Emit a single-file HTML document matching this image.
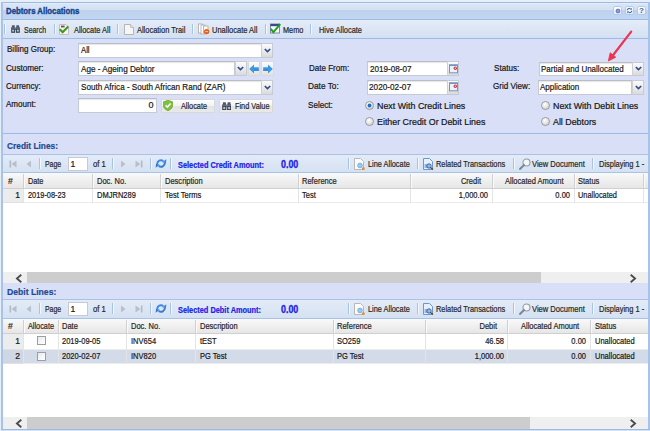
<!DOCTYPE html>
<html><head><meta charset="utf-8"><style>
html,body{margin:0;padding:0;width:650px;height:431px;overflow:hidden;background:#e8eef8}
body>div,body>svg{position:absolute}
</style></head><body>
<div style="left:0px;top:0px;width:650px;height:431px;background:#e8eef8"></div>
<div style="left:1px;top:2px;width:648px;height:428px;border:1px solid #99bbe8;box-sizing:border-box;background:#d8dff7"></div>
<div style="left:2px;top:3px;width:646px;height:16px;background:linear-gradient(#eef3fa 0%,#dae5f4 7%,#d5e1f3 42%,#bcd1ee 44%,#c3d6f0 100%)"></div>
<div style="left:2px;top:19px;width:646px;height:1px;background:#99bbe8"></div>
<div style="left:6.00px;transform-origin:0 50%;top:7.02px;height:8.8px;line-height:8.8px;font-family:'Liberation Sans', sans-serif;font-size:8.8px;font-weight:bold;color:#15428b;white-space:pre;-webkit-text-stroke:0.35px currentColor;transform:scaleX(0.8867);">Debtors Allocations</div>
<div style="left:613px;top:6px;width:9px;height:9px;background:linear-gradient(#ffffff,#e4edf8);border:1px solid #b3cbea;border-radius:2px;box-sizing:border-box"></div>
<div style="left:625px;top:6px;width:9px;height:9px;background:linear-gradient(#ffffff,#e4edf8);border:1px solid #b3cbea;border-radius:2px;box-sizing:border-box"></div>
<div style="left:637px;top:6px;width:9px;height:9px;background:linear-gradient(#ffffff,#e4edf8);border:1px solid #b3cbea;border-radius:2px;box-sizing:border-box"></div>
<div style="left:2px;top:20px;width:646px;height:18px;background:linear-gradient(#e4ecf7,#d4e0f1)"></div>
<div style="left:2px;top:38px;width:646px;height:1px;background:#99bbe8"></div>
<div style="left:4px;top:24px;width:1px;height:10px;background:#a7c3ea"></div>
<div style="left:5px;top:24px;width:1px;height:10px;background:#f4f8fd"></div>
<div style="left:24.20px;transform-origin:0 50%;top:25.62px;height:8.8px;line-height:8.8px;font-family:'Liberation Sans', sans-serif;font-size:8.8px;font-weight:normal;color:#262626;white-space:pre;-webkit-text-stroke:0.2px currentColor;transform:scaleX(0.7892);">Search</div>
<div style="left:54px;top:24px;width:1px;height:10px;background:#a7c3ea"></div>
<div style="left:55px;top:24px;width:1px;height:10px;background:#f4f8fd"></div>
<div style="left:73.70px;transform-origin:0 50%;top:25.62px;height:8.8px;line-height:8.8px;font-family:'Liberation Sans', sans-serif;font-size:8.8px;font-weight:normal;color:#262626;white-space:pre;-webkit-text-stroke:0.2px currentColor;transform:scaleX(0.8436);">Allocate All</div>
<div style="left:117px;top:24px;width:1px;height:10px;background:#a7c3ea"></div>
<div style="left:118px;top:24px;width:1px;height:10px;background:#f4f8fd"></div>
<div style="left:136.60px;transform-origin:0 50%;top:25.62px;height:8.8px;line-height:8.8px;font-family:'Liberation Sans', sans-serif;font-size:8.8px;font-weight:normal;color:#262626;white-space:pre;-webkit-text-stroke:0.2px currentColor;transform:scaleX(0.8459);">Allocation Trail</div>
<div style="left:192px;top:24px;width:1px;height:10px;background:#a7c3ea"></div>
<div style="left:193px;top:24px;width:1px;height:10px;background:#f4f8fd"></div>
<div style="left:211.50px;transform-origin:0 50%;top:25.62px;height:8.8px;line-height:8.8px;font-family:'Liberation Sans', sans-serif;font-size:8.8px;font-weight:normal;color:#262626;white-space:pre;-webkit-text-stroke:0.2px currentColor;transform:scaleX(0.8516);">Unallocate All</div>
<div style="left:265px;top:24px;width:1px;height:10px;background:#a7c3ea"></div>
<div style="left:266px;top:24px;width:1px;height:10px;background:#f4f8fd"></div>
<div style="left:282.80px;transform-origin:0 50%;top:25.62px;height:8.8px;line-height:8.8px;font-family:'Liberation Sans', sans-serif;font-size:8.8px;font-weight:normal;color:#262626;white-space:pre;-webkit-text-stroke:0.2px currentColor;transform:scaleX(0.8342);">Memo</div>
<div style="left:310px;top:24px;width:1px;height:10px;background:#a7c3ea"></div>
<div style="left:311px;top:24px;width:1px;height:10px;background:#f4f8fd"></div>
<div style="left:318.90px;transform-origin:0 50%;top:25.62px;height:8.8px;line-height:8.8px;font-family:'Liberation Sans', sans-serif;font-size:8.8px;font-weight:normal;color:#262626;white-space:pre;-webkit-text-stroke:0.2px currentColor;transform:scaleX(0.8455);">Hive Allocate</div>
<div style="left:2px;top:133px;width:646px;height:1px;background:#99bbe8"></div>
<div style="left:6.80px;transform-origin:0 50%;top:45.45px;height:9px;line-height:9px;font-family:'Liberation Sans', sans-serif;font-size:9px;font-weight:normal;color:#151515;white-space:pre;-webkit-text-stroke:0.2px currentColor;transform:scaleX(0.8921);">Billing Group:</div>
<div style="left:6.30px;transform-origin:0 50%;top:63.75px;height:9px;line-height:9px;font-family:'Liberation Sans', sans-serif;font-size:9px;font-weight:normal;color:#151515;white-space:pre;-webkit-text-stroke:0.2px currentColor;transform:scaleX(0.9033);">Customer:</div>
<div style="left:6.30px;transform-origin:0 50%;top:81.95px;height:9px;line-height:9px;font-family:'Liberation Sans', sans-serif;font-size:9px;font-weight:normal;color:#151515;white-space:pre;-webkit-text-stroke:0.2px currentColor;transform:scaleX(0.8894);">Currency:</div>
<div style="left:6.30px;transform-origin:0 50%;top:100.45px;height:9px;line-height:9px;font-family:'Liberation Sans', sans-serif;font-size:9px;font-weight:normal;color:#151515;white-space:pre;-webkit-text-stroke:0.2px currentColor;transform:scaleX(0.8947);">Amount:</div>
<div style="left:78px;top:43px;width:184px;height:15px;background:#fff;border:1px solid #c6cad4;border-top-color:#b9bdc8;box-sizing:border-box;box-shadow:inset 0 1px 1px #e6e6e6"></div>
<div style="left:261px;top:43px;width:12px;height:15px;background:linear-gradient(#fafafa 0%,#ececec 50%,#dadada 100%);border:1px solid #c6cad4;border-left-color:#d0d0d0;box-sizing:border-box"></div>
<svg style="left:263.5px;top:48.0px" width="7" height="5" viewBox="0 0 7 5"><path d="M0.8 1 L3.5 3.6 L6.2 1" fill="none" stroke="#2a4a8a" stroke-width="1.6"/></svg>
<div style="left:81.00px;transform-origin:0 50%;top:45.95px;height:9px;line-height:9px;font-family:'Liberation Sans', sans-serif;font-size:9px;font-weight:normal;color:#181818;white-space:pre;-webkit-text-stroke:0.2px currentColor;transform:scaleX(0.8587);">All</div>
<div style="left:78px;top:61px;width:157px;height:15px;background:#fff;border:1px solid #c6cad4;border-top-color:#b9bdc8;box-sizing:border-box;box-shadow:inset 0 1px 1px #e6e6e6"></div>
<div style="left:234.5px;top:61px;width:12px;height:15px;background:linear-gradient(#fafafa 0%,#ececec 50%,#dadada 100%);border:1px solid #c6cad4;border-left-color:#d0d0d0;box-sizing:border-box"></div>
<svg style="left:237.0px;top:66.0px" width="7" height="5" viewBox="0 0 7 5"><path d="M0.8 1 L3.5 3.6 L6.2 1" fill="none" stroke="#2a4a8a" stroke-width="1.6"/></svg>
<div style="left:81.00px;transform-origin:0 50%;top:64.85px;height:9px;line-height:9px;font-family:'Liberation Sans', sans-serif;font-size:9px;font-weight:normal;color:#181818;white-space:pre;-webkit-text-stroke:0.2px currentColor;transform:scaleX(0.9055);">Age - Ageing Debtor</div>
<div style="left:247.5px;top:61px;width:12.5px;height:14.5px;background:linear-gradient(#fbfbfb 0%,#f0f0f0 50%,#e2e2e2 100%);border:1px solid #dadada;box-sizing:border-box"></div>
<svg style="left:249.0px;top:63.5px" width="10" height="10" viewBox="0 0 10 10"><path d="M0.2 5 L5 0.6 L5 3.3 L9.8 3.3 L9.8 6.7 L5 6.7 L5 9.4 Z" fill="#3a98e4"/><path d="M5 6.7 L9.8 6.7 L9.8 5.6 L5 5.6 Z" fill="#2a7fd0"/></svg>
<div style="left:261px;top:61px;width:12.5px;height:14.5px;background:linear-gradient(#fbfbfb 0%,#f0f0f0 50%,#e2e2e2 100%);border:1px solid #dadada;box-sizing:border-box"></div>
<svg style="left:262.5px;top:63.5px" width="10" height="10" viewBox="0 0 10 10"><path d="M9.8 5 L5 0.6 L5 3.3 L0.2 3.3 L0.2 6.7 L5 6.7 L5 9.4 Z" fill="#3a98e4"/><path d="M5 6.7 L0.2 6.7 L0.2 5.6 L5 5.6 Z" fill="#2a7fd0"/></svg>
<div style="left:78px;top:80px;width:184px;height:15px;background:#fff;border:1px solid #c6cad4;border-top-color:#b9bdc8;box-sizing:border-box;box-shadow:inset 0 1px 1px #e6e6e6"></div>
<div style="left:261px;top:80px;width:12px;height:15px;background:linear-gradient(#fafafa 0%,#ececec 50%,#dadada 100%);border:1px solid #c6cad4;border-left-color:#d0d0d0;box-sizing:border-box"></div>
<svg style="left:263.5px;top:85.0px" width="7" height="5" viewBox="0 0 7 5"><path d="M0.8 1 L3.5 3.6 L6.2 1" fill="none" stroke="#2a4a8a" stroke-width="1.6"/></svg>
<div style="left:81.00px;transform-origin:0 50%;top:82.95px;height:9px;line-height:9px;font-family:'Liberation Sans', sans-serif;font-size:9px;font-weight:normal;color:#181818;white-space:pre;-webkit-text-stroke:0.2px currentColor;transform:scaleX(0.8999);">South Africa - South African Rand (ZAR)</div>
<div style="left:78px;top:98px;width:79px;height:15px;background:#fff;border:1px solid #c6cad4;border-top-color:#b9bdc8;box-sizing:border-box;box-shadow:inset 0 1px 1px #e6e6e6"></div>
<div style="left:-146.50px;width:300px;text-align:right;transform-origin:100% 50%;top:101.15px;height:9px;line-height:9px;font-family:'Liberation Sans', sans-serif;font-size:9px;font-weight:normal;color:#181818;white-space:pre;-webkit-text-stroke:0.2px currentColor;">0</div>
<div style="left:160.5px;top:98.5px;width:54.5px;height:14px;background:linear-gradient(#fdfdfd 0%,#f2f2f2 50%,#e4e4e4 51%,#e9e9e9 100%);border:1px solid #d8d8d8;border-radius:1px;box-sizing:border-box"></div>
<svg style="left:163px;top:100px" width="10" height="11" viewBox="0 0 10 11"><path d="M5 0.3 L9.6 1.8 L9.6 5.5 C9.6 8 7.5 9.7 5 10.7 C2.5 9.7 0.4 8 0.4 5.5 L0.4 1.8 Z" fill="#7cc23a" stroke="#5a9a26" stroke-width="0.6"/><path d="M2.6 5.4 L4.4 7.1 L7.6 3.6" fill="none" stroke="#fff" stroke-width="1.5"/></svg>
<div style="left:180.50px;transform-origin:0 50%;top:102.09px;height:8.6px;line-height:8.6px;font-family:'Liberation Sans', sans-serif;font-size:8.6px;font-weight:normal;color:#262626;white-space:pre;-webkit-text-stroke:0.2px currentColor;transform:scaleX(0.8503);">Allocate</div>
<div style="left:219px;top:98.5px;width:54px;height:14px;background:linear-gradient(#fdfdfd 0%,#f2f2f2 50%,#e4e4e4 51%,#e9e9e9 100%);border:1px solid #d8d8d8;border-radius:1px;box-sizing:border-box"></div>
<div style="left:234.50px;transform-origin:0 50%;top:102.09px;height:8.6px;line-height:8.6px;font-family:'Liberation Sans', sans-serif;font-size:8.6px;font-weight:normal;color:#262626;white-space:pre;-webkit-text-stroke:0.2px currentColor;transform:scaleX(0.8528);">Find Value</div>
<svg style="left:221.5px;top:101.5px" width="9.450000000000001" height="8.4" viewBox="0 0 9 8"><rect x="0.9" y="0.3" width="2.8" height="2.4" fill="#4a5565"/><rect x="5.3" y="0.3" width="2.8" height="2.4" fill="#4a5565"/><rect x="0.2" y="2.3" width="3.9" height="5.5" fill="#343d4a"/><rect x="4.9" y="2.3" width="3.9" height="5.5" fill="#343d4a"/><rect x="3.9" y="3" width="1.2" height="2.2" fill="#58657a"/><rect x="0.6" y="2.6" width="7.8" height="1" fill="#6d7f9c"/><circle cx="2.15" cy="5.7" r="1.15" fill="#b6c0cf"/><circle cx="6.85" cy="5.7" r="1.15" fill="#b6c0cf"/></svg>
<svg style="left:10.8px;top:25px" width="9.0" height="8.0" viewBox="0 0 9 8"><rect x="0.9" y="0.3" width="2.8" height="2.4" fill="#4a5565"/><rect x="5.3" y="0.3" width="2.8" height="2.4" fill="#4a5565"/><rect x="0.2" y="2.3" width="3.9" height="5.5" fill="#343d4a"/><rect x="4.9" y="2.3" width="3.9" height="5.5" fill="#343d4a"/><rect x="3.9" y="3" width="1.2" height="2.2" fill="#58657a"/><rect x="0.6" y="2.6" width="7.8" height="1" fill="#6d7f9c"/><circle cx="2.15" cy="5.7" r="1.15" fill="#b6c0cf"/><circle cx="6.85" cy="5.7" r="1.15" fill="#b6c0cf"/></svg>
<div style="left:308.80px;transform-origin:0 50%;top:63.75px;height:9px;line-height:9px;font-family:'Liberation Sans', sans-serif;font-size:9px;font-weight:normal;color:#151515;white-space:pre;-webkit-text-stroke:0.2px currentColor;transform:scaleX(0.8930);">Date From:</div>
<div style="left:308.10px;transform-origin:0 50%;top:81.95px;height:9px;line-height:9px;font-family:'Liberation Sans', sans-serif;font-size:9px;font-weight:normal;color:#151515;white-space:pre;-webkit-text-stroke:0.2px currentColor;transform:scaleX(0.9203);">Date To:</div>
<div style="left:308.00px;transform-origin:0 50%;top:100.75px;height:9px;line-height:9px;font-family:'Liberation Sans', sans-serif;font-size:9px;font-weight:normal;color:#151515;white-space:pre;-webkit-text-stroke:0.2px currentColor;transform:scaleX(0.9013);">Select:</div>
<div style="left:366.5px;top:61px;width:81px;height:15px;background:#fff;border:1px solid #c6cad4;border-top-color:#b9bdc8;box-sizing:border-box;box-shadow:inset 0 1px 1px #e6e6e6"></div>
<div style="left:447px;top:61px;width:12px;height:15px;background:linear-gradient(#fafafa 0%,#ececec 50%,#dadada 100%);border:1px solid #c6cad4;border-left-color:#d0d0d0;box-sizing:border-box"></div>
<svg style="left:449px;top:63.5px" width="9" height="10" viewBox="0 0 9 10"><rect x="0.5" y="0.8" width="8" height="8" fill="#eef1f6" stroke="#6f93c8"/><rect x="0.5" y="0.8" width="8" height="1.2" fill="#6f93c8"/><circle cx="6.3" cy="4.2" r="1.7" fill="#c83a44"/><circle cx="6.3" cy="4.2" r="0.6" fill="#fff"/></svg>
<div style="left:369.80px;transform-origin:0 50%;top:64.95px;height:9px;line-height:9px;font-family:'Liberation Sans', sans-serif;font-size:9px;font-weight:normal;color:#181818;white-space:pre;-webkit-text-stroke:0.2px currentColor;transform:scaleX(0.9034);">2019-08-07</div>
<div style="left:366.5px;top:79.5px;width:81px;height:15px;background:#fff;border:1px solid #c6cad4;border-top-color:#b9bdc8;box-sizing:border-box;box-shadow:inset 0 1px 1px #e6e6e6"></div>
<div style="left:447px;top:79.5px;width:12px;height:15px;background:linear-gradient(#fafafa 0%,#ececec 50%,#dadada 100%);border:1px solid #c6cad4;border-left-color:#d0d0d0;box-sizing:border-box"></div>
<svg style="left:449px;top:82.0px" width="9" height="10" viewBox="0 0 9 10"><rect x="0.5" y="0.8" width="8" height="8" fill="#eef1f6" stroke="#6f93c8"/><rect x="0.5" y="0.8" width="8" height="1.2" fill="#6f93c8"/><circle cx="6.3" cy="4.2" r="1.7" fill="#c83a44"/><circle cx="6.3" cy="4.2" r="0.6" fill="#fff"/></svg>
<div style="left:369.00px;transform-origin:0 50%;top:82.95px;height:9px;line-height:9px;font-family:'Liberation Sans', sans-serif;font-size:9px;font-weight:normal;color:#181818;white-space:pre;-webkit-text-stroke:0.2px currentColor;transform:scaleX(0.9121);">2020-02-07</div>
<svg style="left:365.2px;top:101.3px" width="9" height="9" viewBox="0 0 9 9"><defs><radialGradient id="rg" cx="0.4" cy="0.35" r="0.7"><stop offset="0" stop-color="#ffffff"/><stop offset="1" stop-color="#d0d0d0"/></radialGradient></defs><circle cx="4.5" cy="4.5" r="4" fill="url(#rg)" stroke="#8c8c8c" stroke-width="0.8"/><circle cx="4.5" cy="4.5" r="1.9" fill="#1f6fc8"/></svg>
<svg style="left:365.2px;top:117.0px" width="9" height="9" viewBox="0 0 9 9"><defs><radialGradient id="rg" cx="0.4" cy="0.35" r="0.7"><stop offset="0" stop-color="#ffffff"/><stop offset="1" stop-color="#d0d0d0"/></radialGradient></defs><circle cx="4.5" cy="4.5" r="4" fill="url(#rg)" stroke="#8c8c8c" stroke-width="0.8"/></svg>
<div style="left:377.20px;transform-origin:0 50%;top:102.35px;height:9px;line-height:9px;font-family:'Liberation Sans', sans-serif;font-size:9px;font-weight:normal;color:#151515;white-space:pre;-webkit-text-stroke:0.2px currentColor;transform:scaleX(0.9862);">Next With Credit Lines</div>
<div style="left:377.20px;transform-origin:0 50%;top:117.95px;height:9px;line-height:9px;font-family:'Liberation Sans', sans-serif;font-size:9px;font-weight:normal;color:#151515;white-space:pre;-webkit-text-stroke:0.2px currentColor;transform:scaleX(0.9850);">Either Credit Or Debit Lines</div>
<div style="left:493.80px;transform-origin:0 50%;top:63.55px;height:9px;line-height:9px;font-family:'Liberation Sans', sans-serif;font-size:9px;font-weight:normal;color:#151515;white-space:pre;-webkit-text-stroke:0.2px currentColor;transform:scaleX(0.8995);">Status:</div>
<div style="left:493.10px;transform-origin:0 50%;top:81.95px;height:9px;line-height:9px;font-family:'Liberation Sans', sans-serif;font-size:9px;font-weight:normal;color:#151515;white-space:pre;-webkit-text-stroke:0.2px currentColor;transform:scaleX(0.8994);">Grid View:</div>
<div style="left:538.5px;top:61.5px;width:94px;height:14.5px;background:#fff;border:1px solid #c6cad4;border-top-color:#b9bdc8;box-sizing:border-box;box-shadow:inset 0 1px 1px #e6e6e6"></div>
<div style="left:632px;top:61.5px;width:12px;height:14.5px;background:linear-gradient(#fafafa 0%,#ececec 50%,#dadada 100%);border:1px solid #c6cad4;border-left-color:#d0d0d0;box-sizing:border-box"></div>
<svg style="left:634.5px;top:66.25px" width="7" height="5" viewBox="0 0 7 5"><path d="M0.8 1 L3.5 3.6 L6.2 1" fill="none" stroke="#2a4a8a" stroke-width="1.6"/></svg>
<div style="left:541.20px;transform-origin:0 50%;top:65.05px;height:9px;line-height:9px;font-family:'Liberation Sans', sans-serif;font-size:9px;font-weight:normal;color:#181818;white-space:pre;-webkit-text-stroke:0.2px currentColor;transform:scaleX(0.8876);">Partial and Unallocated</div>
<div style="left:537.7px;top:80px;width:94.5px;height:14.5px;background:#fff;border:1px solid #c6cad4;border-top-color:#b9bdc8;box-sizing:border-box;box-shadow:inset 0 1px 1px #e6e6e6"></div>
<div style="left:632px;top:80px;width:12px;height:14.5px;background:linear-gradient(#fafafa 0%,#ececec 50%,#dadada 100%);border:1px solid #c6cad4;border-left-color:#d0d0d0;box-sizing:border-box"></div>
<svg style="left:634.5px;top:84.75px" width="7" height="5" viewBox="0 0 7 5"><path d="M0.8 1 L3.5 3.6 L6.2 1" fill="none" stroke="#2a4a8a" stroke-width="1.6"/></svg>
<div style="left:540.30px;transform-origin:0 50%;top:82.95px;height:9px;line-height:9px;font-family:'Liberation Sans', sans-serif;font-size:9px;font-weight:normal;color:#181818;white-space:pre;-webkit-text-stroke:0.2px currentColor;transform:scaleX(0.8925);">Application</div>
<svg style="left:540.7px;top:101.2px" width="9" height="9" viewBox="0 0 9 9"><defs><radialGradient id="rg" cx="0.4" cy="0.35" r="0.7"><stop offset="0" stop-color="#ffffff"/><stop offset="1" stop-color="#d0d0d0"/></radialGradient></defs><circle cx="4.5" cy="4.5" r="4" fill="url(#rg)" stroke="#8c8c8c" stroke-width="0.8"/></svg>
<svg style="left:540.7px;top:116.8px" width="9" height="9" viewBox="0 0 9 9"><defs><radialGradient id="rg" cx="0.4" cy="0.35" r="0.7"><stop offset="0" stop-color="#ffffff"/><stop offset="1" stop-color="#d0d0d0"/></radialGradient></defs><circle cx="4.5" cy="4.5" r="4" fill="url(#rg)" stroke="#8c8c8c" stroke-width="0.8"/></svg>
<div style="left:552.70px;transform-origin:0 50%;top:102.25px;height:9px;line-height:9px;font-family:'Liberation Sans', sans-serif;font-size:9px;font-weight:normal;color:#151515;white-space:pre;-webkit-text-stroke:0.2px currentColor;transform:scaleX(0.9856);">Next With Debit Lines</div>
<div style="left:552.70px;transform-origin:0 50%;top:117.65px;height:9px;line-height:9px;font-family:'Liberation Sans', sans-serif;font-size:9px;font-weight:normal;color:#151515;white-space:pre;-webkit-text-stroke:0.2px currentColor;transform:scaleX(0.9837);">All Debtors</div>
<svg style="left:600px;top:26px" width="40" height="40" viewBox="0 0 40 40"><path d="M31.2 5.6 L12 30.5" stroke="#ee3352" stroke-width="2.2" fill="none" stroke-linecap="round"/><path d="M8.3 35 L10.2 26.8 L15.8 31.2 Z" fill="#ee3352" stroke="#ee3352" stroke-width="0.8" stroke-linejoin="round"/></svg>
<div style="left:2px;top:134px;width:646px;height:20px;background:#d8dff7"></div>
<div style="left:6.80px;transform-origin:0 50%;top:140.72px;height:9.5px;line-height:9.5px;font-family:'Liberation Sans', sans-serif;font-size:9.5px;font-weight:bold;color:#1e4a93;white-space:pre;-webkit-text-stroke:0.2px currentColor;transform:scaleX(0.8784);">Credit Lines:</div>
<div style="left:2px;top:154px;width:646px;height:1px;background:#a9c3e8"></div>
<div style="left:2px;top:155px;width:646px;height:17px;background:linear-gradient(#e3ebf7,#d5e1f2)"></div>
<div style="left:2px;top:172px;width:646px;height:1px;background:#a9c3e8"></div>
<svg style="left:8.5px;top:159.5px" width="8" height="8" viewBox="0 0 8 8"><rect x="0.5" y="0.5" width="1.6" height="7" fill="#b3b9c2"/><path d="M7.5 0.5 L2.5 4 L7.5 7.5 Z" fill="#b9bfc8"/></svg>
<svg style="left:25.5px;top:159.5px" width="6" height="8" viewBox="0 0 6 8"><path d="M5 0.5 L0.5 4 L5 7.5 Z" fill="#b9bfc8"/></svg>
<div style="left:39px;top:158px;width:1px;height:11px;background:#a7c3ea"></div>
<div style="left:40px;top:158px;width:1px;height:11px;background:#f4f8fd"></div>
<div style="left:45.00px;transform-origin:0 50%;top:160.29px;height:8.6px;line-height:8.6px;font-family:'Liberation Sans', sans-serif;font-size:8.6px;font-weight:normal;color:#262626;white-space:pre;-webkit-text-stroke:0.2px currentColor;transform:scaleX(0.8068);">Page</div>
<div style="left:67.5px;top:156.5px;width:20.5px;height:14px;background:#fff;border:1px solid #c6cad4;box-sizing:border-box"></div>
<div style="left:70.50px;transform-origin:0 50%;top:160.29px;height:8.6px;line-height:8.6px;font-family:'Liberation Sans', sans-serif;font-size:8.6px;font-weight:normal;color:#181818;white-space:pre;-webkit-text-stroke:0.2px currentColor;">1</div>
<div style="left:93.00px;transform-origin:0 50%;top:160.29px;height:8.6px;line-height:8.6px;font-family:'Liberation Sans', sans-serif;font-size:8.6px;font-weight:normal;color:#262626;white-space:pre;-webkit-text-stroke:0.2px currentColor;transform:scaleX(0.8924);">of 1</div>
<div style="left:112px;top:158px;width:1px;height:11px;background:#a7c3ea"></div>
<div style="left:113px;top:158px;width:1px;height:11px;background:#f4f8fd"></div>
<svg style="left:119.5px;top:159.5px" width="6" height="8" viewBox="0 0 6 8"><path d="M1 0.5 L5.5 4 L1 7.5 Z" fill="#b9bfc8"/></svg>
<svg style="left:135px;top:159.5px" width="8" height="8" viewBox="0 0 8 8"><rect x="5.9" y="0.5" width="1.6" height="7" fill="#b3b9c2"/><path d="M0.5 0.5 L5.5 4 L0.5 7.5 Z" fill="#b9bfc8"/></svg>
<div style="left:149.5px;top:158px;width:1px;height:11px;background:#a7c3ea"></div>
<div style="left:150.5px;top:158px;width:1px;height:11px;background:#f4f8fd"></div>
<svg style="left:154.5px;top:157.5px" width="12" height="11" viewBox="0 0 12 11"><path d="M2.2 6 C2.2 3 5.5 1.2 8.3 3" fill="none" stroke="#3a86e0" stroke-width="1.9"/><path d="M11.3 1.3 L11 5.3 L7.2 4.2 Z" fill="#3a86e0"/><path d="M9.8 5 C9.8 8 6.5 9.8 3.7 8" fill="none" stroke="#2f7ad8" stroke-width="1.9"/><path d="M0.7 9.7 L1 5.7 L4.8 6.8 Z" fill="#2f7ad8"/></svg>
<div style="left:170px;top:158px;width:1px;height:11px;background:#a7c3ea"></div>
<div style="left:171px;top:158px;width:1px;height:11px;background:#f4f8fd"></div>
<div style="left:177.70px;transform-origin:0 50%;top:160.72px;height:8.8px;line-height:8.8px;font-family:'Liberation Sans', sans-serif;font-size:8.8px;font-weight:bold;color:#2020e8;white-space:pre;-webkit-text-stroke:0.2px currentColor;transform:scaleX(0.8404);">Selected Credit Amount:</div>
<div style="left:281.00px;transform-origin:0 50%;top:159.70px;height:10px;line-height:10px;font-family:'Liberation Sans', sans-serif;font-size:10px;font-weight:bold;color:#2020e8;white-space:pre;-webkit-text-stroke:0.3px currentColor;transform:scaleX(0.8886);">0.00</div>
<div style="left:348px;top:158px;width:1px;height:11px;background:#a7c3ea"></div>
<div style="left:349px;top:158px;width:1px;height:11px;background:#f4f8fd"></div>
<svg style="left:354px;top:158px" width="11" height="12" viewBox="0 0 11 12"><path d="M0.5 0.5 H6.5 L9.5 3.5 V11.5 H0.5 Z" fill="#fbfbfb" stroke="#b8b8b8"/><circle cx="6" cy="7.5" r="2.4" fill="#9cc7ee" stroke="#5a9ad8" stroke-width="0.6"/><rect x="8" y="9.5" width="2.6" height="2.3" fill="#e08a2c"/></svg>
<div style="left:367.70px;transform-origin:0 50%;top:160.29px;height:8.6px;line-height:8.6px;font-family:'Liberation Sans', sans-serif;font-size:8.6px;font-weight:normal;color:#262626;white-space:pre;-webkit-text-stroke:0.2px currentColor;transform:scaleX(0.8577);">Line Allocate</div>
<div style="left:416.5px;top:158px;width:1px;height:11px;background:#a7c3ea"></div>
<div style="left:417.5px;top:158px;width:1px;height:11px;background:#f4f8fd"></div>
<svg style="left:423px;top:158px" width="11" height="12" viewBox="0 0 11 12"><path d="M0.5 0.5 H6.5 L9.5 3.5 V11.5 H0.5 Z" fill="#e6f0fb" stroke="#6a97cc"/><rect x="1.5" y="6" width="6" height="4" fill="#8fb9e8"/><circle cx="6" cy="8" r="2.2" fill="none" stroke="#2a5aa0" stroke-width="0.9"/><path d="M7.5 9.5 L10 11.5" stroke="#6b3a10" stroke-width="1.3"/></svg>
<div style="left:435.80px;transform-origin:0 50%;top:160.29px;height:8.6px;line-height:8.6px;font-family:'Liberation Sans', sans-serif;font-size:8.6px;font-weight:normal;color:#262626;white-space:pre;-webkit-text-stroke:0.2px currentColor;transform:scaleX(0.8571);">Related Transactions</div>
<div style="left:512.5px;top:158px;width:1px;height:11px;background:#a7c3ea"></div>
<div style="left:513.5px;top:158px;width:1px;height:11px;background:#f4f8fd"></div>
<svg style="left:518.5px;top:157.5px" width="12" height="12" viewBox="0 0 12 12"><circle cx="7.5" cy="4.5" r="3.5" fill="#f4f6f8" stroke="#8f9aa8" stroke-width="1.1"/><path d="M5 7 L1 11" stroke="#7a8492" stroke-width="1.8" stroke-linecap="round"/></svg>
<div style="left:531.50px;transform-origin:0 50%;top:160.29px;height:8.6px;line-height:8.6px;font-family:'Liberation Sans', sans-serif;font-size:8.6px;font-weight:normal;color:#262626;white-space:pre;-webkit-text-stroke:0.2px currentColor;transform:scaleX(0.8795);">View Document</div>
<div style="left:591.5px;top:158px;width:1px;height:11px;background:#a7c3ea"></div>
<div style="left:592.5px;top:158px;width:1px;height:11px;background:#f4f8fd"></div>
<div style="left:599.40px;transform-origin:0 50%;top:160.29px;height:8.6px;line-height:8.6px;font-family:'Liberation Sans', sans-serif;font-size:8.6px;font-weight:normal;color:#262626;white-space:pre;-webkit-text-stroke:0.2px currentColor;transform:scaleX(0.8682);">Displaying 1 -</div>
<div style="left:3px;top:173px;width:645px;height:16px;background:linear-gradient(#f9f9f9,#e6e6e6);border-bottom:1px solid #d0d0d0;box-sizing:border-box"></div>
<div style="left:3px;top:189px;width:645px;height:83px;background:#fff"></div>
<div style="left:3px;top:189px;width:645px;height:14px;background:#fff;border-bottom:1px solid #ececec;box-sizing:border-box"></div>
<div style="left:3px;top:189px;width:20px;height:14px;background:#ececec;border-bottom:1px solid #e0e0e0;box-sizing:border-box"></div>
<div style="left:23px;top:174px;width:1px;height:14px;background:#d0d0d0"></div>
<div style="left:24px;top:174px;width:1px;height:14px;background:#fafafa"></div>
<div style="left:23px;top:189px;width:1px;height:14px;background:#e4e4e4"></div>
<div style="left:92px;top:174px;width:1px;height:14px;background:#d0d0d0"></div>
<div style="left:93px;top:174px;width:1px;height:14px;background:#fafafa"></div>
<div style="left:92px;top:189px;width:1px;height:14px;background:#e4e4e4"></div>
<div style="left:160px;top:174px;width:1px;height:14px;background:#d0d0d0"></div>
<div style="left:161px;top:174px;width:1px;height:14px;background:#fafafa"></div>
<div style="left:160px;top:189px;width:1px;height:14px;background:#e4e4e4"></div>
<div style="left:298px;top:174px;width:1px;height:14px;background:#d0d0d0"></div>
<div style="left:299px;top:174px;width:1px;height:14px;background:#fafafa"></div>
<div style="left:298px;top:189px;width:1px;height:14px;background:#e4e4e4"></div>
<div style="left:409.5px;top:174px;width:1px;height:14px;background:#d0d0d0"></div>
<div style="left:410.5px;top:174px;width:1px;height:14px;background:#fafafa"></div>
<div style="left:409.5px;top:189px;width:1px;height:14px;background:#e4e4e4"></div>
<div style="left:492px;top:174px;width:1px;height:14px;background:#d0d0d0"></div>
<div style="left:493px;top:174px;width:1px;height:14px;background:#fafafa"></div>
<div style="left:492px;top:189px;width:1px;height:14px;background:#e4e4e4"></div>
<div style="left:574px;top:174px;width:1px;height:14px;background:#d0d0d0"></div>
<div style="left:575px;top:174px;width:1px;height:14px;background:#fafafa"></div>
<div style="left:574px;top:189px;width:1px;height:14px;background:#e4e4e4"></div>
<div style="left:642.5px;top:174px;width:1px;height:14px;background:#d0d0d0"></div>
<div style="left:643.5px;top:174px;width:1px;height:14px;background:#fafafa"></div>
<div style="left:642.5px;top:189px;width:1px;height:14px;background:#e4e4e4"></div>
<div style="left:3px;top:272px;width:645px;height:11.5px;background:#efefef"></div>
<div style="left:27px;top:272px;width:514px;height:11.5px;background:#cdcdcd"></div>
<svg style="left:14.5px;top:273.5px" width="8" height="9" viewBox="0 0 8 9"><path d="M6.3 0.8 L1.9 4.5 L6.3 8.2" fill="none" stroke="#4a4a4a" stroke-width="1.8"/></svg>
<svg style="left:629px;top:273.5px" width="8" height="9" viewBox="0 0 8 9"><path d="M1.7 0.8 L6.1 4.5 L1.7 8.2" fill="none" stroke="#4a4a4a" stroke-width="1.8"/></svg>
<div style="left:8.10px;transform-origin:0 50%;top:176.89px;height:8.6px;line-height:8.6px;font-family:'Liberation Sans', sans-serif;font-size:8.6px;font-weight:normal;color:#262626;white-space:pre;-webkit-text-stroke:0.2px currentColor;">#</div>
<div style="left:28.20px;transform-origin:0 50%;top:176.89px;height:8.6px;line-height:8.6px;font-family:'Liberation Sans', sans-serif;font-size:8.6px;font-weight:normal;color:#262626;white-space:pre;-webkit-text-stroke:0.2px currentColor;transform:scaleX(0.8482);">Date</div>
<div style="left:96.80px;transform-origin:0 50%;top:176.89px;height:8.6px;line-height:8.6px;font-family:'Liberation Sans', sans-serif;font-size:8.6px;font-weight:normal;color:#262626;white-space:pre;-webkit-text-stroke:0.2px currentColor;transform:scaleX(0.8750);">Doc. No.</div>
<div style="left:165.30px;transform-origin:0 50%;top:176.89px;height:8.6px;line-height:8.6px;font-family:'Liberation Sans', sans-serif;font-size:8.6px;font-weight:normal;color:#262626;white-space:pre;-webkit-text-stroke:0.2px currentColor;transform:scaleX(0.8750);">Description</div>
<div style="left:302.40px;transform-origin:0 50%;top:176.89px;height:8.6px;line-height:8.6px;font-family:'Liberation Sans', sans-serif;font-size:8.6px;font-weight:normal;color:#262626;white-space:pre;-webkit-text-stroke:0.2px currentColor;transform:scaleX(0.8750);">Reference</div>
<div style="left:181.00px;width:300px;text-align:right;transform-origin:100% 50%;top:176.89px;height:8.6px;line-height:8.6px;font-family:'Liberation Sans', sans-serif;font-size:8.6px;font-weight:normal;color:#262626;white-space:pre;-webkit-text-stroke:0.2px currentColor;transform:scaleX(0.8750);">Credit</div>
<div style="left:505.30px;transform-origin:0 50%;top:176.89px;height:8.6px;line-height:8.6px;font-family:'Liberation Sans', sans-serif;font-size:8.6px;font-weight:normal;color:#262626;white-space:pre;-webkit-text-stroke:0.2px currentColor;transform:scaleX(0.8746);">Allocated Amount</div>
<div style="left:578.40px;transform-origin:0 50%;top:176.89px;height:8.6px;line-height:8.6px;font-family:'Liberation Sans', sans-serif;font-size:8.6px;font-weight:normal;color:#262626;white-space:pre;-webkit-text-stroke:0.2px currentColor;transform:scaleX(0.8750);">Status</div>
<div style="left:-280.10px;width:300px;text-align:right;transform-origin:100% 50%;top:191.49px;height:8.6px;line-height:8.6px;font-family:'Liberation Sans', sans-serif;font-size:8.6px;font-weight:normal;color:#181818;white-space:pre;-webkit-text-stroke:0.2px currentColor;">1</div>
<div style="left:28.20px;transform-origin:0 50%;top:191.49px;height:8.6px;line-height:8.6px;font-family:'Liberation Sans', sans-serif;font-size:8.6px;font-weight:normal;color:#181818;white-space:pre;-webkit-text-stroke:0.2px currentColor;transform:scaleX(0.8574);">2019-08-23</div>
<div style="left:96.80px;transform-origin:0 50%;top:191.49px;height:8.6px;line-height:8.6px;font-family:'Liberation Sans', sans-serif;font-size:8.6px;font-weight:normal;color:#181818;white-space:pre;-webkit-text-stroke:0.2px currentColor;transform:scaleX(0.8750);">DMJRN289</div>
<div style="left:165.30px;transform-origin:0 50%;top:191.49px;height:8.6px;line-height:8.6px;font-family:'Liberation Sans', sans-serif;font-size:8.6px;font-weight:normal;color:#181818;white-space:pre;-webkit-text-stroke:0.2px currentColor;transform:scaleX(0.8750);">Test Terms</div>
<div style="left:302.40px;transform-origin:0 50%;top:191.49px;height:8.6px;line-height:8.6px;font-family:'Liberation Sans', sans-serif;font-size:8.6px;font-weight:normal;color:#181818;white-space:pre;-webkit-text-stroke:0.2px currentColor;transform:scaleX(0.8750);">Test</div>
<div style="left:187.80px;width:300px;text-align:right;transform-origin:100% 50%;top:191.49px;height:8.6px;line-height:8.6px;font-family:'Liberation Sans', sans-serif;font-size:8.6px;font-weight:normal;color:#181818;white-space:pre;-webkit-text-stroke:0.2px currentColor;transform:scaleX(0.8750);">1,000.00</div>
<div style="left:269.60px;width:300px;text-align:right;transform-origin:100% 50%;top:191.49px;height:8.6px;line-height:8.6px;font-family:'Liberation Sans', sans-serif;font-size:8.6px;font-weight:normal;color:#181818;white-space:pre;-webkit-text-stroke:0.2px currentColor;transform:scaleX(0.8750);">0.00</div>
<div style="left:578.40px;transform-origin:0 50%;top:191.49px;height:8.6px;line-height:8.6px;font-family:'Liberation Sans', sans-serif;font-size:8.6px;font-weight:normal;color:#181818;white-space:pre;-webkit-text-stroke:0.2px currentColor;transform:scaleX(0.8570);">Unallocated</div>
<div style="left:2px;top:283px;width:646px;height:16px;background:#d8dff7"></div>
<div style="left:6.80px;transform-origin:0 50%;top:287.03px;height:9.5px;line-height:9.5px;font-family:'Liberation Sans', sans-serif;font-size:9.5px;font-weight:bold;color:#1e4a93;white-space:pre;-webkit-text-stroke:0.2px currentColor;transform:scaleX(0.9067);">Debit Lines:</div>
<div style="left:2px;top:299px;width:646px;height:1px;background:#a9c3e8"></div>
<div style="left:2px;top:300px;width:646px;height:18px;background:linear-gradient(#e3ebf7,#d5e1f2)"></div>
<div style="left:2px;top:318px;width:646px;height:1px;background:#a9c3e8"></div>
<svg style="left:8.5px;top:304.5px" width="8" height="8" viewBox="0 0 8 8"><rect x="0.5" y="0.5" width="1.6" height="7" fill="#b3b9c2"/><path d="M7.5 0.5 L2.5 4 L7.5 7.5 Z" fill="#b9bfc8"/></svg>
<svg style="left:25.5px;top:304.5px" width="6" height="8" viewBox="0 0 6 8"><path d="M5 0.5 L0.5 4 L5 7.5 Z" fill="#b9bfc8"/></svg>
<div style="left:39px;top:303px;width:1px;height:11px;background:#a7c3ea"></div>
<div style="left:40px;top:303px;width:1px;height:11px;background:#f4f8fd"></div>
<div style="left:45.00px;transform-origin:0 50%;top:305.29px;height:8.6px;line-height:8.6px;font-family:'Liberation Sans', sans-serif;font-size:8.6px;font-weight:normal;color:#262626;white-space:pre;-webkit-text-stroke:0.2px currentColor;transform:scaleX(0.8068);">Page</div>
<div style="left:67.5px;top:301.5px;width:20.5px;height:14px;background:#fff;border:1px solid #c6cad4;box-sizing:border-box"></div>
<div style="left:70.50px;transform-origin:0 50%;top:305.29px;height:8.6px;line-height:8.6px;font-family:'Liberation Sans', sans-serif;font-size:8.6px;font-weight:normal;color:#181818;white-space:pre;-webkit-text-stroke:0.2px currentColor;">1</div>
<div style="left:93.00px;transform-origin:0 50%;top:305.29px;height:8.6px;line-height:8.6px;font-family:'Liberation Sans', sans-serif;font-size:8.6px;font-weight:normal;color:#262626;white-space:pre;-webkit-text-stroke:0.2px currentColor;transform:scaleX(0.8924);">of 1</div>
<div style="left:112px;top:303px;width:1px;height:11px;background:#a7c3ea"></div>
<div style="left:113px;top:303px;width:1px;height:11px;background:#f4f8fd"></div>
<svg style="left:119.5px;top:304.5px" width="6" height="8" viewBox="0 0 6 8"><path d="M1 0.5 L5.5 4 L1 7.5 Z" fill="#b9bfc8"/></svg>
<svg style="left:135px;top:304.5px" width="8" height="8" viewBox="0 0 8 8"><rect x="5.9" y="0.5" width="1.6" height="7" fill="#b3b9c2"/><path d="M0.5 0.5 L5.5 4 L0.5 7.5 Z" fill="#b9bfc8"/></svg>
<div style="left:149.5px;top:303px;width:1px;height:11px;background:#a7c3ea"></div>
<div style="left:150.5px;top:303px;width:1px;height:11px;background:#f4f8fd"></div>
<svg style="left:154.5px;top:302.5px" width="12" height="11" viewBox="0 0 12 11"><path d="M2.2 6 C2.2 3 5.5 1.2 8.3 3" fill="none" stroke="#3a86e0" stroke-width="1.9"/><path d="M11.3 1.3 L11 5.3 L7.2 4.2 Z" fill="#3a86e0"/><path d="M9.8 5 C9.8 8 6.5 9.8 3.7 8" fill="none" stroke="#2f7ad8" stroke-width="1.9"/><path d="M0.7 9.7 L1 5.7 L4.8 6.8 Z" fill="#2f7ad8"/></svg>
<div style="left:170px;top:303px;width:1px;height:11px;background:#a7c3ea"></div>
<div style="left:171px;top:303px;width:1px;height:11px;background:#f4f8fd"></div>
<div style="left:177.70px;transform-origin:0 50%;top:305.72px;height:8.8px;line-height:8.8px;font-family:'Liberation Sans', sans-serif;font-size:8.8px;font-weight:bold;color:#2020e8;white-space:pre;-webkit-text-stroke:0.2px currentColor;transform:scaleX(0.8392);">Selected Debit Amount:</div>
<div style="left:281.00px;transform-origin:0 50%;top:304.70px;height:10px;line-height:10px;font-family:'Liberation Sans', sans-serif;font-size:10px;font-weight:bold;color:#2020e8;white-space:pre;-webkit-text-stroke:0.3px currentColor;transform:scaleX(0.8886);">0.00</div>
<div style="left:348px;top:303px;width:1px;height:11px;background:#a7c3ea"></div>
<div style="left:349px;top:303px;width:1px;height:11px;background:#f4f8fd"></div>
<svg style="left:354px;top:303px" width="11" height="12" viewBox="0 0 11 12"><path d="M0.5 0.5 H6.5 L9.5 3.5 V11.5 H0.5 Z" fill="#fbfbfb" stroke="#b8b8b8"/><circle cx="6" cy="7.5" r="2.4" fill="#9cc7ee" stroke="#5a9ad8" stroke-width="0.6"/><rect x="8" y="9.5" width="2.6" height="2.3" fill="#e08a2c"/></svg>
<div style="left:367.70px;transform-origin:0 50%;top:305.29px;height:8.6px;line-height:8.6px;font-family:'Liberation Sans', sans-serif;font-size:8.6px;font-weight:normal;color:#262626;white-space:pre;-webkit-text-stroke:0.2px currentColor;transform:scaleX(0.8577);">Line Allocate</div>
<div style="left:416.5px;top:303px;width:1px;height:11px;background:#a7c3ea"></div>
<div style="left:417.5px;top:303px;width:1px;height:11px;background:#f4f8fd"></div>
<svg style="left:423px;top:303px" width="11" height="12" viewBox="0 0 11 12"><path d="M0.5 0.5 H6.5 L9.5 3.5 V11.5 H0.5 Z" fill="#e6f0fb" stroke="#6a97cc"/><rect x="1.5" y="6" width="6" height="4" fill="#8fb9e8"/><circle cx="6" cy="8" r="2.2" fill="none" stroke="#2a5aa0" stroke-width="0.9"/><path d="M7.5 9.5 L10 11.5" stroke="#6b3a10" stroke-width="1.3"/></svg>
<div style="left:435.80px;transform-origin:0 50%;top:305.29px;height:8.6px;line-height:8.6px;font-family:'Liberation Sans', sans-serif;font-size:8.6px;font-weight:normal;color:#262626;white-space:pre;-webkit-text-stroke:0.2px currentColor;transform:scaleX(0.8571);">Related Transactions</div>
<div style="left:512.5px;top:303px;width:1px;height:11px;background:#a7c3ea"></div>
<div style="left:513.5px;top:303px;width:1px;height:11px;background:#f4f8fd"></div>
<svg style="left:518.5px;top:302.5px" width="12" height="12" viewBox="0 0 12 12"><circle cx="7.5" cy="4.5" r="3.5" fill="#f4f6f8" stroke="#8f9aa8" stroke-width="1.1"/><path d="M5 7 L1 11" stroke="#7a8492" stroke-width="1.8" stroke-linecap="round"/></svg>
<div style="left:531.50px;transform-origin:0 50%;top:305.29px;height:8.6px;line-height:8.6px;font-family:'Liberation Sans', sans-serif;font-size:8.6px;font-weight:normal;color:#262626;white-space:pre;-webkit-text-stroke:0.2px currentColor;transform:scaleX(0.8795);">View Document</div>
<div style="left:591.5px;top:303px;width:1px;height:11px;background:#a7c3ea"></div>
<div style="left:592.5px;top:303px;width:1px;height:11px;background:#f4f8fd"></div>
<div style="left:599.40px;transform-origin:0 50%;top:305.29px;height:8.6px;line-height:8.6px;font-family:'Liberation Sans', sans-serif;font-size:8.6px;font-weight:normal;color:#262626;white-space:pre;-webkit-text-stroke:0.2px currentColor;transform:scaleX(0.8682);">Displaying 1 -</div>
<div style="left:3px;top:319px;width:645px;height:15px;background:linear-gradient(#f9f9f9,#e6e6e6);border-bottom:1px solid #d0d0d0;box-sizing:border-box"></div>
<div style="left:3px;top:334px;width:645px;height:83px;background:#fff"></div>
<div style="left:3px;top:334px;width:645px;height:16px;background:#fff;border-bottom:1px solid #ececec;box-sizing:border-box"></div>
<div style="left:3px;top:334px;width:20px;height:16px;background:#ececec;border-bottom:1px solid #e0e0e0;box-sizing:border-box"></div>
<div style="left:3px;top:350px;width:645px;height:14px;background:#d3dbe8;border-bottom:1px solid #ececec;box-sizing:border-box"></div>
<div style="left:3px;top:350px;width:20px;height:14px;background:#cfd7e4;border-bottom:1px solid #e0e0e0;box-sizing:border-box"></div>
<div style="left:23px;top:320px;width:1px;height:13px;background:#d0d0d0"></div>
<div style="left:24px;top:320px;width:1px;height:13px;background:#fafafa"></div>
<div style="left:23px;top:334px;width:1px;height:30px;background:#e4e4e4"></div>
<div style="left:57.5px;top:320px;width:1px;height:13px;background:#d0d0d0"></div>
<div style="left:58.5px;top:320px;width:1px;height:13px;background:#fafafa"></div>
<div style="left:57.5px;top:334px;width:1px;height:30px;background:#e4e4e4"></div>
<div style="left:126px;top:320px;width:1px;height:13px;background:#d0d0d0"></div>
<div style="left:127px;top:320px;width:1px;height:13px;background:#fafafa"></div>
<div style="left:126px;top:334px;width:1px;height:30px;background:#e4e4e4"></div>
<div style="left:195px;top:320px;width:1px;height:13px;background:#d0d0d0"></div>
<div style="left:196px;top:320px;width:1px;height:13px;background:#fafafa"></div>
<div style="left:195px;top:334px;width:1px;height:30px;background:#e4e4e4"></div>
<div style="left:332.5px;top:320px;width:1px;height:13px;background:#d0d0d0"></div>
<div style="left:333.5px;top:320px;width:1px;height:13px;background:#fafafa"></div>
<div style="left:332.5px;top:334px;width:1px;height:30px;background:#e4e4e4"></div>
<div style="left:425px;top:320px;width:1px;height:13px;background:#d0d0d0"></div>
<div style="left:426px;top:320px;width:1px;height:13px;background:#fafafa"></div>
<div style="left:425px;top:334px;width:1px;height:30px;background:#e4e4e4"></div>
<div style="left:507px;top:320px;width:1px;height:13px;background:#d0d0d0"></div>
<div style="left:508px;top:320px;width:1px;height:13px;background:#fafafa"></div>
<div style="left:507px;top:334px;width:1px;height:30px;background:#e4e4e4"></div>
<div style="left:589.5px;top:320px;width:1px;height:13px;background:#d0d0d0"></div>
<div style="left:590.5px;top:320px;width:1px;height:13px;background:#fafafa"></div>
<div style="left:589.5px;top:334px;width:1px;height:30px;background:#e4e4e4"></div>
<div style="left:3px;top:417px;width:645px;height:11.5px;background:#efefef"></div>
<div style="left:27px;top:417px;width:503px;height:11.5px;background:#cdcdcd"></div>
<svg style="left:14.5px;top:418.5px" width="8" height="9" viewBox="0 0 8 9"><path d="M6.3 0.8 L1.9 4.5 L6.3 8.2" fill="none" stroke="#4a4a4a" stroke-width="1.8"/></svg>
<svg style="left:629px;top:418.5px" width="8" height="9" viewBox="0 0 8 9"><path d="M1.7 0.8 L6.1 4.5 L1.7 8.2" fill="none" stroke="#4a4a4a" stroke-width="1.8"/></svg>
<div style="left:8.00px;transform-origin:0 50%;top:322.29px;height:8.6px;line-height:8.6px;font-family:'Liberation Sans', sans-serif;font-size:8.6px;font-weight:normal;color:#262626;white-space:pre;-webkit-text-stroke:0.2px currentColor;">#</div>
<div style="left:28.00px;transform-origin:0 50%;top:322.29px;height:8.6px;line-height:8.6px;font-family:'Liberation Sans', sans-serif;font-size:8.6px;font-weight:normal;color:#262626;white-space:pre;-webkit-text-stroke:0.2px currentColor;transform:scaleX(0.8503);">Allocate</div>
<div style="left:62.40px;transform-origin:0 50%;top:322.29px;height:8.6px;line-height:8.6px;font-family:'Liberation Sans', sans-serif;font-size:8.6px;font-weight:normal;color:#262626;white-space:pre;-webkit-text-stroke:0.2px currentColor;transform:scaleX(0.8750);">Date</div>
<div style="left:131.20px;transform-origin:0 50%;top:322.29px;height:8.6px;line-height:8.6px;font-family:'Liberation Sans', sans-serif;font-size:8.6px;font-weight:normal;color:#262626;white-space:pre;-webkit-text-stroke:0.2px currentColor;transform:scaleX(0.8750);">Doc. No.</div>
<div style="left:199.50px;transform-origin:0 50%;top:322.29px;height:8.6px;line-height:8.6px;font-family:'Liberation Sans', sans-serif;font-size:8.6px;font-weight:normal;color:#262626;white-space:pre;-webkit-text-stroke:0.2px currentColor;transform:scaleX(0.8750);">Description</div>
<div style="left:336.50px;transform-origin:0 50%;top:322.29px;height:8.6px;line-height:8.6px;font-family:'Liberation Sans', sans-serif;font-size:8.6px;font-weight:normal;color:#262626;white-space:pre;-webkit-text-stroke:0.2px currentColor;transform:scaleX(0.8750);">Reference</div>
<div style="left:197.10px;width:300px;text-align:right;transform-origin:100% 50%;top:322.29px;height:8.6px;line-height:8.6px;font-family:'Liberation Sans', sans-serif;font-size:8.6px;font-weight:normal;color:#262626;white-space:pre;-webkit-text-stroke:0.2px currentColor;transform:scaleX(0.8750);">Debit</div>
<div style="left:521.20px;transform-origin:0 50%;top:322.29px;height:8.6px;line-height:8.6px;font-family:'Liberation Sans', sans-serif;font-size:8.6px;font-weight:normal;color:#262626;white-space:pre;-webkit-text-stroke:0.2px currentColor;transform:scaleX(0.8701);">Allocated Amount</div>
<div style="left:594.60px;transform-origin:0 50%;top:322.29px;height:8.6px;line-height:8.6px;font-family:'Liberation Sans', sans-serif;font-size:8.6px;font-weight:normal;color:#262626;white-space:pre;-webkit-text-stroke:0.2px currentColor;transform:scaleX(0.8750);">Status</div>
<div style="left:-280.10px;width:300px;text-align:right;transform-origin:100% 50%;top:337.19px;height:8.6px;line-height:8.6px;font-family:'Liberation Sans', sans-serif;font-size:8.6px;font-weight:normal;color:#181818;white-space:pre;-webkit-text-stroke:0.2px currentColor;">1</div>
<div style="left:62.40px;transform-origin:0 50%;top:337.19px;height:8.6px;line-height:8.6px;font-family:'Liberation Sans', sans-serif;font-size:8.6px;font-weight:normal;color:#181818;white-space:pre;-webkit-text-stroke:0.2px currentColor;transform:scaleX(0.8750);">2019-09-05</div>
<div style="left:131.20px;transform-origin:0 50%;top:337.19px;height:8.6px;line-height:8.6px;font-family:'Liberation Sans', sans-serif;font-size:8.6px;font-weight:normal;color:#181818;white-space:pre;-webkit-text-stroke:0.2px currentColor;transform:scaleX(0.8750);">INV654</div>
<div style="left:199.50px;transform-origin:0 50%;top:337.19px;height:8.6px;line-height:8.6px;font-family:'Liberation Sans', sans-serif;font-size:8.6px;font-weight:normal;color:#181818;white-space:pre;-webkit-text-stroke:0.2px currentColor;transform:scaleX(0.8750);">tEST</div>
<div style="left:336.50px;transform-origin:0 50%;top:337.19px;height:8.6px;line-height:8.6px;font-family:'Liberation Sans', sans-serif;font-size:8.6px;font-weight:normal;color:#181818;white-space:pre;-webkit-text-stroke:0.2px currentColor;transform:scaleX(0.8750);">SO259</div>
<div style="left:203.50px;width:300px;text-align:right;transform-origin:100% 50%;top:337.19px;height:8.6px;line-height:8.6px;font-family:'Liberation Sans', sans-serif;font-size:8.6px;font-weight:normal;color:#181818;white-space:pre;-webkit-text-stroke:0.2px currentColor;transform:scaleX(0.8750);">46.58</div>
<div style="left:285.50px;width:300px;text-align:right;transform-origin:100% 50%;top:337.19px;height:8.6px;line-height:8.6px;font-family:'Liberation Sans', sans-serif;font-size:8.6px;font-weight:normal;color:#181818;white-space:pre;-webkit-text-stroke:0.2px currentColor;transform:scaleX(0.8750);">0.00</div>
<div style="left:594.60px;transform-origin:0 50%;top:337.19px;height:8.6px;line-height:8.6px;font-family:'Liberation Sans', sans-serif;font-size:8.6px;font-weight:normal;color:#181818;white-space:pre;-webkit-text-stroke:0.2px currentColor;transform:scaleX(0.8750);">Unallocated</div>
<div style="left:-280.10px;width:300px;text-align:right;transform-origin:100% 50%;top:352.49px;height:8.6px;line-height:8.6px;font-family:'Liberation Sans', sans-serif;font-size:8.6px;font-weight:normal;color:#181818;white-space:pre;-webkit-text-stroke:0.2px currentColor;">2</div>
<div style="left:62.40px;transform-origin:0 50%;top:352.49px;height:8.6px;line-height:8.6px;font-family:'Liberation Sans', sans-serif;font-size:8.6px;font-weight:normal;color:#181818;white-space:pre;-webkit-text-stroke:0.2px currentColor;transform:scaleX(0.8750);">2020-02-07</div>
<div style="left:131.20px;transform-origin:0 50%;top:352.49px;height:8.6px;line-height:8.6px;font-family:'Liberation Sans', sans-serif;font-size:8.6px;font-weight:normal;color:#181818;white-space:pre;-webkit-text-stroke:0.2px currentColor;transform:scaleX(0.8750);">INV820</div>
<div style="left:199.50px;transform-origin:0 50%;top:352.49px;height:8.6px;line-height:8.6px;font-family:'Liberation Sans', sans-serif;font-size:8.6px;font-weight:normal;color:#181818;white-space:pre;-webkit-text-stroke:0.2px currentColor;transform:scaleX(0.8750);">PG Test</div>
<div style="left:336.50px;transform-origin:0 50%;top:352.49px;height:8.6px;line-height:8.6px;font-family:'Liberation Sans', sans-serif;font-size:8.6px;font-weight:normal;color:#181818;white-space:pre;-webkit-text-stroke:0.2px currentColor;transform:scaleX(0.8750);">PG Test</div>
<div style="left:203.50px;width:300px;text-align:right;transform-origin:100% 50%;top:352.49px;height:8.6px;line-height:8.6px;font-family:'Liberation Sans', sans-serif;font-size:8.6px;font-weight:normal;color:#181818;white-space:pre;-webkit-text-stroke:0.2px currentColor;transform:scaleX(0.8750);">1,000.00</div>
<div style="left:285.50px;width:300px;text-align:right;transform-origin:100% 50%;top:352.49px;height:8.6px;line-height:8.6px;font-family:'Liberation Sans', sans-serif;font-size:8.6px;font-weight:normal;color:#181818;white-space:pre;-webkit-text-stroke:0.2px currentColor;transform:scaleX(0.8750);">0.00</div>
<div style="left:594.60px;transform-origin:0 50%;top:352.49px;height:8.6px;line-height:8.6px;font-family:'Liberation Sans', sans-serif;font-size:8.6px;font-weight:normal;color:#181818;white-space:pre;-webkit-text-stroke:0.2px currentColor;transform:scaleX(0.8750);">Unallocated</div>
<div style="left:36.5px;top:336.3px;width:9px;height:9px;background:linear-gradient(135deg,#e8eaee,#ffffff);border:1px solid #9a9ea6;box-sizing:border-box"></div>
<div style="left:36.5px;top:351.5px;width:9px;height:9px;background:linear-gradient(135deg,#e8eaee,#ffffff);border:1px solid #9a9ea6;box-sizing:border-box"></div>
<svg style="left:59px;top:23.5px" width="10" height="11" viewBox="0 0 10 11"><path d="M0.5 0.5 H7 L9.5 3 V10.5 H0.5 Z" fill="#fbeff2" stroke="#c0c0c0"/><rect x="2" y="1.6" width="3.6" height="1.8" fill="#555"/><path d="M0.8 5.3 L3.6 8.3 L9.3 2.5" fill="none" stroke="#3a9a1a" stroke-width="2"/></svg>
<svg style="left:123.5px;top:23.5px" width="10" height="11" viewBox="0 0 10 11"><path d="M0.5 0.5 H6.5 L9.5 3.5 V10.5 H0.5 Z" fill="#f6f6f6" stroke="#b5b5b5"/><path d="M6.5 0.5 V3.5 H9.5" fill="#e0e0e0" stroke="#b5b5b5" stroke-width="0.7"/></svg>
<svg style="left:198px;top:23px" width="12" height="12" viewBox="0 0 12 12"><rect x="0.5" y="1" width="4" height="9" fill="#fff" stroke="#aaa" stroke-width="0.8"/><rect x="3" y="2" width="4" height="9" fill="#fff" stroke="#aaa" stroke-width="0.8"/><rect x="5.5" y="3" width="4.5" height="7" fill="#fff" stroke="#aaa" stroke-width="0.8"/><circle cx="8.6" cy="8.6" r="2.7" fill="#e8601a"/><rect x="7.2" y="8.2" width="2.8" height="0.9" fill="#ffd0b0"/></svg>
<svg style="left:269.5px;top:23px" width="11" height="11" viewBox="0 0 11 11"><rect x="0.5" y="1" width="9" height="9" fill="#fdfdfd" stroke="#7d86a8"/><rect x="0.5" y="1" width="9" height="2.2" fill="#3a4a8c"/><path d="M0.8 5.8 L3.4 9.2 L10.3 1.2" fill="none" stroke="#1aa01a" stroke-width="1.9"/></svg>
<svg style="left:614.5px;top:7.5px" width="6" height="6" viewBox="0 0 9 9"><g fill="#6f78c8"><circle cx="4.5" cy="4.5" r="2.9"/><rect x="3.7" y="0.8" width="1.6" height="7.4"/><rect x="0.8" y="3.7" width="7.4" height="1.6"/><rect x="3.7" y="0.8" width="1.6" height="7.4" transform="rotate(45 4.5 4.5)"/><rect x="3.7" y="0.8" width="1.6" height="7.4" transform="rotate(-45 4.5 4.5)"/></g><circle cx="4.5" cy="4.5" r="1.1" fill="#c9cdf0"/></svg>
<svg style="left:626px;top:7px" width="7" height="7" viewBox="0 0 9 9"><path d="M1.6 4.3 C1.6 2.3 3.5 1.3 5.6 2.1" fill="none" stroke="#3b74b8" stroke-width="1.5"/><path d="M7.6 1 L7.3 3.9 L4.8 3 Z" fill="#3b74b8"/><path d="M7.4 4.7 C7.4 6.7 5.5 7.7 3.4 6.9" fill="none" stroke="#3b74b8" stroke-width="1.5"/><path d="M1.4 8 L1.7 5.1 L4.2 6 Z" fill="#3b74b8"/></svg>
<div style="left:637px;top:5.5px;width:9px;height:10px;font:bold 8px/10px 'Liberation Sans', sans-serif;color:#2f64a8;text-align:center">?</div>
<div style="left:1px;top:2px;width:2px;height:428px;background:#a6c3ec"></div>
<div style="left:648px;top:2px;width:2px;height:428px;background:#a6c3ec"></div>
<div style="left:1px;top:429px;width:649px;height:1px;background:#99bbe8"></div>
<div style="left:1px;top:430px;width:649px;height:1px;background:#d4e2f5"></div>
</body></html>
